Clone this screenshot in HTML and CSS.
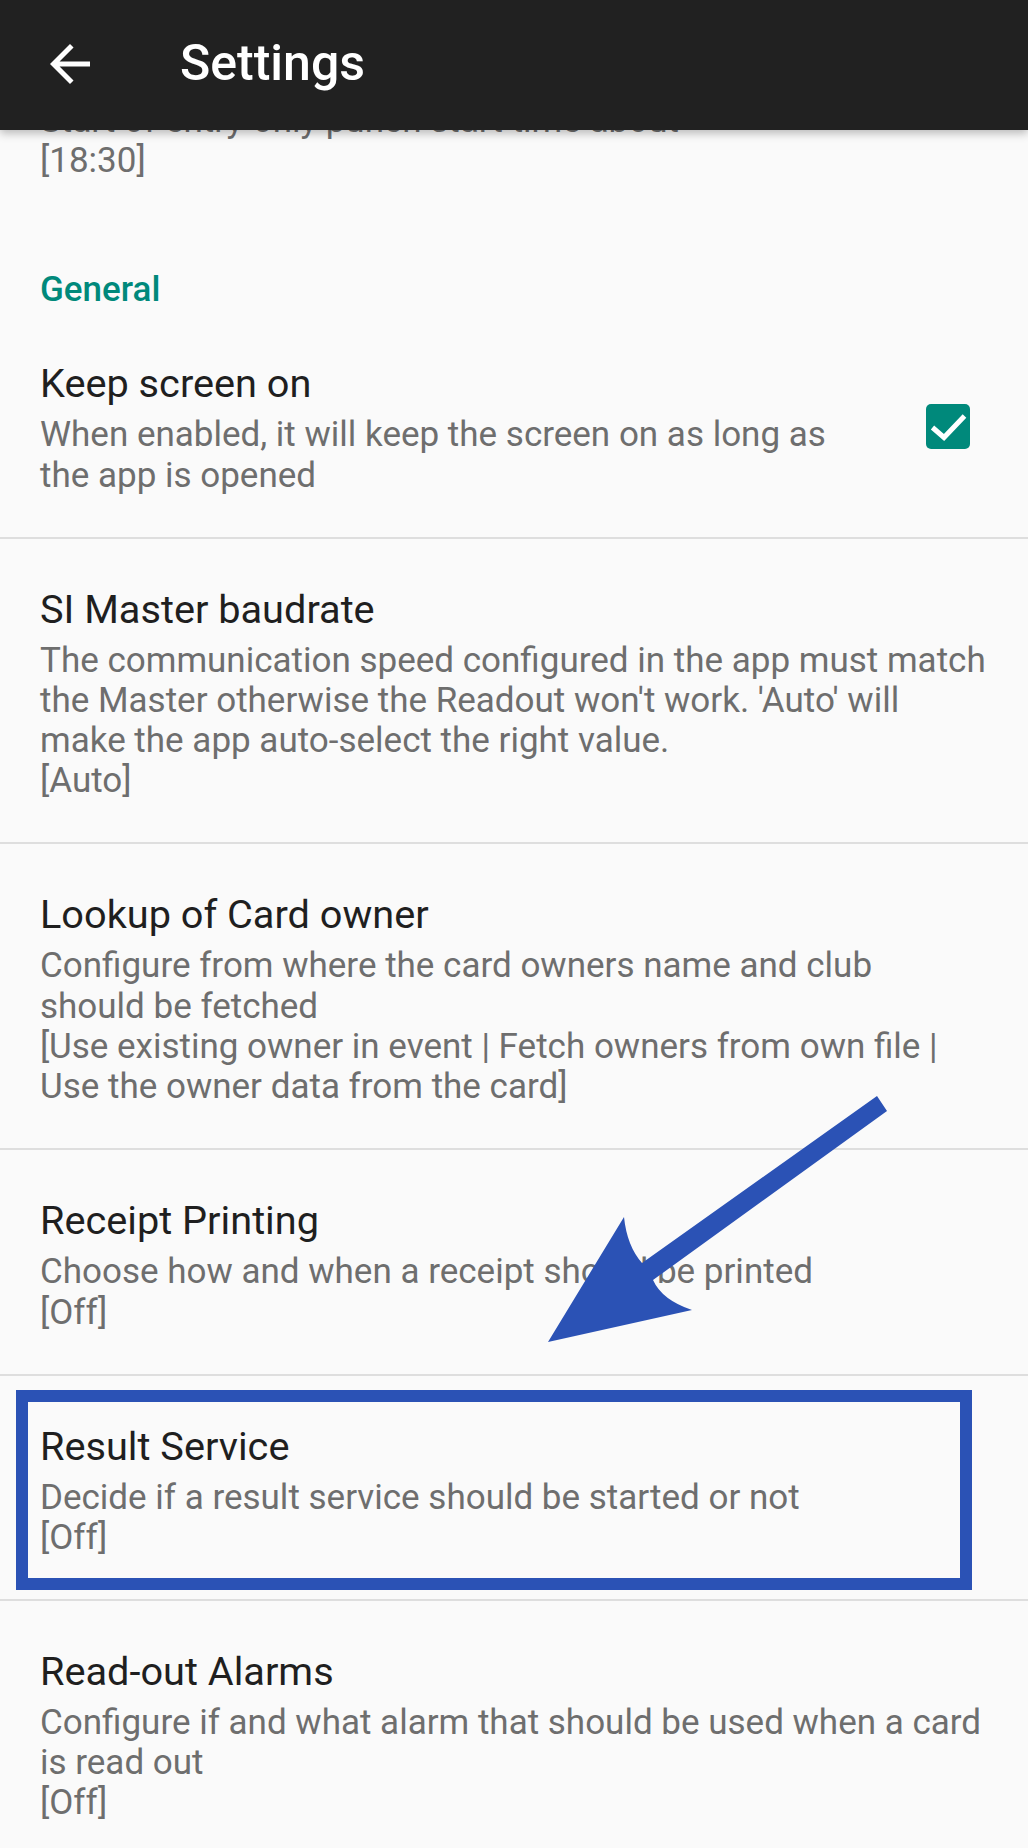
FILE: index.html
```html
<!DOCTYPE html>
<html lang="en">
<head>
<meta charset="utf-8">
<title>Settings</title>
<link rel="stylesheet" href="styles.css">
</head>
<body>
<div class="page">
  <header class="appbar">
    <svg class="appbar-back" viewBox="0 0 24 24" width="60" height="60" aria-hidden="true">
      <path d="M20 11H7.83l5.59-5.59L12 4l-8 8 8 8 1.41-1.41L7.83 13H20v-2z" fill="#ffffff"/>
    </svg>
    <h1 class="appbar-title">Settings</h1>
  </header>

  <main class="list">
    <div class="pref pref-partial">
      <div class="pref-summary">Start of entry-only punch start time about<br>[18:30]</div>
    </div>

    <div class="category">General</div>

    <div class="pref pref-widget">
      <div class="pref-text">
        <div class="pref-title">Keep screen on</div>
        <div class="pref-summary">When enabled, it will keep the screen on as long as<br>the app is opened</div>
      </div>
      <span class="checkbox">
        <svg viewBox="0 0 44 45" width="44" height="45" aria-hidden="true">
          <polyline points="6.5,23.5 18,33.5 38.5,12" fill="none" stroke="#ffffff" stroke-width="5"/>
        </svg>
      </span>
    </div>

    <div class="pref">
      <div class="pref-title">SI Master baudrate</div>
      <div class="pref-summary">The communication speed configured in the app must match<br>the Master otherwise the Readout won't work. 'Auto' will<br>make the app auto-select the right value.<br>[Auto]</div>
    </div>

    <div class="pref">
      <div class="pref-title">Lookup of Card owner</div>
      <div class="pref-summary">Configure from where the card owners name and club<br>should be fetched<br>[Use existing owner in event | Fetch owners from own file |<br>Use the owner data from the card]</div>
    </div>

    <div class="pref">
      <div class="pref-title">Receipt Printing</div>
      <div class="pref-summary">Choose how and when a receipt should be printed<br>[Off]</div>
    </div>

    <div class="pref pref-highlight">
      <div class="pref-title">Result Service</div>
      <div class="pref-summary">Decide if a result service should be started or not<br>[Off]</div>
      <span class="highlight-box"></span>
    </div>

    <div class="pref">
      <div class="pref-title">Read-out Alarms</div>
      <div class="pref-summary">Configure if and what alarm that should be used when a card<br>is read out<br>[Off]</div>
    </div>
  </main>

  <svg class="annotation-arrow" viewBox="0 0 1028 1848" width="1028" height="1848" aria-hidden="true">
    <path d="M877 1096 L887 1111 L653 1280 Q662 1300 692 1310 L548 1342 L624 1217 Q627 1246 642 1263 Z" fill="#2b52b5"/>
  </svg>
</div>
</body>
</html>
```

FILE: styles.css
```css
html, body {
  margin: 0;
  padding: 0;
  background: #fafafa;
}

body {
  font-family: Roboto, "Noto Sans", "Liberation Sans", sans-serif;
  width: 1028px;
  height: 1848px;
  overflow: hidden;
}

.page {
  position: relative;
  width: 1028px;
  height: 1848px;
  overflow: hidden;
}

.appbar {
  position: fixed;
  top: 0;
  left: 0;
  right: 0;
  height: 130px;
  z-index: 5;
  background: #212121;
  display: flex;
  align-items: center;
  padding-left: 40px;
  box-shadow: 0 3px 9px rgba(0, 0, 0, 0.28);
}

.appbar-back {
  display: block;
  flex: none;
  margin-top: -2px;
}

.appbar-title {
  margin: 0 0 4px 80px;
  font-family: Roboto, "Noto Sans", sans-serif;
  font-weight: 500;
  font-size: 50px;
  line-height: 60px;
  color: #ffffff;
  letter-spacing: 0;
}

.list {
  display: flex;
  flex-direction: column;
}

.pref {
  position: relative;
  padding: 48px 40px 40.7px 40px;
  border-bottom: 2px solid #dedede;
}

.pref-partial {
  padding-top: 100.5px;
  border-bottom: none;
}

.pref-widget {
  display: flex;
  align-items: center;
  padding-right: 58px;
}

.pref-text {
  flex: 1;
  min-width: 0;
}

.pref-title {
  font-size: 39.7px;
  line-height: 46px;
  color: #1f1f1f;
}

.pref-summary {
  margin-top: 8px;
  font-size: 35px;
  line-height: 40.3px;
  color: #6e6e6e;
}

.pref-partial .pref-summary {
  margin-top: 0;
}

.category {
  padding: 48px 40px 3.5px;
  font-size: 35px;
  line-height: 40px;
  font-weight: 500;
  color: #00897b;
}

.checkbox {
  flex: none;
  width: 44px;
  height: 45px;
  margin-bottom: 4px;
  border-radius: 5px;
  background: #00897b;
  display: flex;
}

.checkbox svg {
  display: block;
}

.highlight-box {
  position: absolute;
  left: 16px;
  right: 56px;
  top: 14px;
  bottom: 9px;
  border: 12px solid #2b52b5;
  pointer-events: none;
}

.annotation-arrow {
  position: absolute;
  left: 0;
  top: 0;
  z-index: 3;
  pointer-events: none;
}
```
